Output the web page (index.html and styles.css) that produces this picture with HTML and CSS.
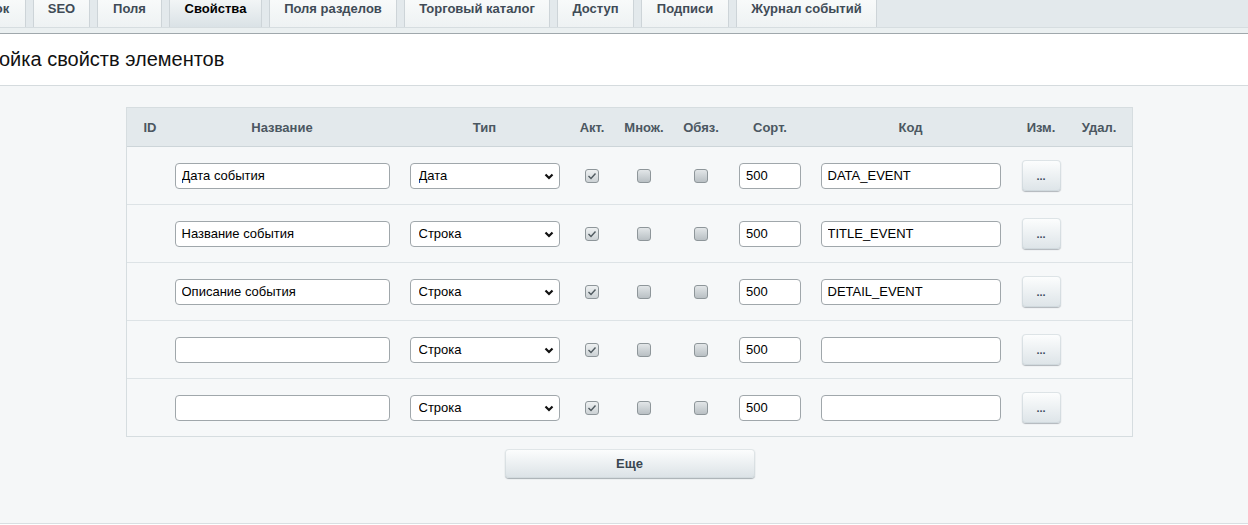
FILE: index.html
```html
<!DOCTYPE html>
<html lang="ru">
<head>
<meta charset="utf-8">
<title>Свойства</title>
<link rel="stylesheet" href="styles.css">
</head>
<body>
<div class="tabbar">
  <div class="tabs">
    <div class="tab t-first">ок</div>
    <div class="tab t-seo">SEO</div>
    <div class="tab t-fields">Поля</div>
    <div class="tab t-props tab-active">Свойства</div>
    <div class="tab t-sect">Поля разделов</div>
    <div class="tab t-cat">Торговый каталог</div>
    <div class="tab t-acc">Доступ</div>
    <div class="tab t-sign">Подписи</div>
    <div class="tab t-log">Журнал событий</div>
  </div>
  <div class="tabstrip"></div>
</div>
<div class="heading">ойка свойств элементов</div>
<div class="main">
  <div class="wrap">
    <div class="grid">
      <div class="row head">
        <div>ID</div><div>Название</div><div>Тип</div><div>Акт.</div><div>Множ.</div><div>Обяз.</div><div>Сорт.</div><div>Код</div><div>Изм.</div><div class="del">Удал.</div>
      </div>
      <div class="row">
        <div></div>
        <input class="inp name" type="text" value="Дата события">
        <div class="sel"><select><option>Дата</option></select><svg class="chev" width="10" height="7" viewBox="0 0 10 7"><polyline points="1.5,1.5 5,5 8.5,1.5" fill="none" stroke="#111" stroke-width="2.2"/></svg></div>
        <span class="cb on"><svg width="12" height="12" viewBox="0 0 12 12"><polyline points="2.5,6 5,8.5 9.5,3.5" fill="none" stroke="#505a60" stroke-width="1.4"/></svg></span>
        <span class="cb"></span>
        <span class="cb"></span>
        <input class="inp sort" type="text" value="500">
        <input class="inp code" type="text" value="DATA_EVENT">
        <button class="edit">...</button>
        <div></div>
      </div>
      <div class="row">
        <div></div>
        <input class="inp name" type="text" value="Название события">
        <div class="sel"><select><option>Строка</option></select><svg class="chev" width="10" height="7" viewBox="0 0 10 7"><polyline points="1.5,1.5 5,5 8.5,1.5" fill="none" stroke="#111" stroke-width="2.2"/></svg></div>
        <span class="cb on"><svg width="12" height="12" viewBox="0 0 12 12"><polyline points="2.5,6 5,8.5 9.5,3.5" fill="none" stroke="#505a60" stroke-width="1.4"/></svg></span>
        <span class="cb"></span>
        <span class="cb"></span>
        <input class="inp sort" type="text" value="500">
        <input class="inp code" type="text" value="TITLE_EVENT">
        <button class="edit">...</button>
        <div></div>
      </div>
      <div class="row">
        <div></div>
        <input class="inp name" type="text" value="Описание события">
        <div class="sel"><select><option>Строка</option></select><svg class="chev" width="10" height="7" viewBox="0 0 10 7"><polyline points="1.5,1.5 5,5 8.5,1.5" fill="none" stroke="#111" stroke-width="2.2"/></svg></div>
        <span class="cb on"><svg width="12" height="12" viewBox="0 0 12 12"><polyline points="2.5,6 5,8.5 9.5,3.5" fill="none" stroke="#505a60" stroke-width="1.4"/></svg></span>
        <span class="cb"></span>
        <span class="cb"></span>
        <input class="inp sort" type="text" value="500">
        <input class="inp code" type="text" value="DETAIL_EVENT">
        <button class="edit">...</button>
        <div></div>
      </div>
      <div class="row">
        <div></div>
        <input class="inp name" type="text" value="">
        <div class="sel"><select><option>Строка</option></select><svg class="chev" width="10" height="7" viewBox="0 0 10 7"><polyline points="1.5,1.5 5,5 8.5,1.5" fill="none" stroke="#111" stroke-width="2.2"/></svg></div>
        <span class="cb on"><svg width="12" height="12" viewBox="0 0 12 12"><polyline points="2.5,6 5,8.5 9.5,3.5" fill="none" stroke="#505a60" stroke-width="1.4"/></svg></span>
        <span class="cb"></span>
        <span class="cb"></span>
        <input class="inp sort" type="text" value="500">
        <input class="inp code" type="text" value="">
        <button class="edit">...</button>
        <div></div>
      </div>
      <div class="row last">
        <div></div>
        <input class="inp name" type="text" value="">
        <div class="sel"><select><option>Строка</option></select><svg class="chev" width="10" height="7" viewBox="0 0 10 7"><polyline points="1.5,1.5 5,5 8.5,1.5" fill="none" stroke="#111" stroke-width="2.2"/></svg></div>
        <span class="cb on"><svg width="12" height="12" viewBox="0 0 12 12"><polyline points="2.5,6 5,8.5 9.5,3.5" fill="none" stroke="#505a60" stroke-width="1.4"/></svg></span>
        <span class="cb"></span>
        <span class="cb"></span>
        <input class="inp sort" type="text" value="500">
        <input class="inp code" type="text" value="">
        <button class="edit">...</button>
        <div></div>
      </div>
    </div>
    <button class="more">Еще</button>
  </div>
</div>
</body>
</html>
```
FILE: styles.css
```css
* { box-sizing: border-box; }
html, body { margin: 0; padding: 0; background: #ffffff; overflow: hidden; }
body { font-family: "Liberation Sans", Arial, sans-serif; font-size: 13px; color: #000; }

.tabbar { background: #e3e9ec; }
.tabs { display: flex; gap: 7px; height: 27px; align-items: stretch; }
.tab {
  flex: 0 0 auto;
  height: 27px;
  padding: 0;
  text-align: center;
  border-left: 1px solid #cdd4d8;
  border-right: 1px solid #cdd4d8;
  background: linear-gradient(#f8fafa, #eef2f3);
  font-weight: bold;
  font-size: 13px;
  line-height: 18px;
  color: #404b56;
  white-space: nowrap;
}
.t-first { width: 48px; margin-left: -22px; }
.t-seo { width: 57px; }
.t-fields { width: 65px; }
.t-props { width: 93px; }
.t-sect { width: 128px; }
.t-cat { width: 146px; }
.t-acc { width: 77px; }
.t-sign { width: 88px; }
.t-log { width: 141px; }
.tab-active { background: linear-gradient(#f2f5f6, #dae2e6); color: #000; }
.tabstrip {
  height: 7px;
  border-top: 1px solid #d6dde0;
  background: #ebf0f1;
  border-bottom: 1px solid #a0a8ac;
}

.heading {
  background: #fff;
  padding: 13px 0 14px;
  margin-left: -1px;
  font-size: 20px;
  line-height: 24px;
  color: #111;
  border-bottom: 1px solid #d5dbde;
}

.main {
  background: #f5f7f8;
  height: 438px;
  padding: 21px 0 0 126px;
  border-bottom: 1px solid #d9dfe2;
}
.wrap { width: 1007px; display: flex; flex-direction: column; align-items: center; }
.grid {
  width: 1007px;
  border: 1px solid #d6dde0;
  background: #f6f8f9;
}
.row {
  display: grid;
  grid-template-columns: 46px 218px 187px 28px 76px 38px 100px 181px 80px 51px;
  height: 58px;
  border-bottom: 1px solid #dde3e6;
  align-items: center;
  justify-items: center;
}
.row.last { height: 57px; border-bottom: none; }
.row.head {
  height: 39px;
  background: #e3e9ec;
  border-bottom: 1px solid #cdd5d9;
  font-weight: bold;
  color: #4b5761;
}
.row.head .del { justify-self: stretch; text-align: center; padding-right: 15px; }

.inp {
  height: 26px;
  border: 1px solid #a0a7ab;
  border-radius: 4px;
  background: #fff;
  padding: 0 6px;
  font-family: "Liberation Sans", Arial, sans-serif;
  font-size: 13px;
  color: #000;
  outline: none;
}
.inp.name { width: 215px; }
.inp.sort { width: 62px; }
.inp.code { width: 180px; }

.sel { position: relative; width: 150px; height: 26px; }
.sel select {
  appearance: none;
  -webkit-appearance: none;
  width: 100%;
  height: 100%;
  border: 1px solid #a0a7ab;
  border-radius: 4px;
  background: #fff;
  padding: 0 24px 0 8px;
  font-family: "Liberation Sans", Arial, sans-serif;
  font-size: 13px;
  color: #000;
  outline: none;
}
.chev { position: absolute; right: 6px; top: 10px; pointer-events: none; }

.cb {
  width: 14px;
  height: 14px;
  border: 1px solid #8e969a;
  border-radius: 3px;
  background: linear-gradient(#e2e6e8, #b9c0c4);
  display: flex;
  align-items: center;
  justify-content: center;
}
.cb.on { background: linear-gradient(#eef1f2, #ccd2d5); }

.edit {
  width: 39px;
  height: 31px;
  border: none;
  border-radius: 4px;
  background: linear-gradient(#fdfefe, #dde4e8);
  box-shadow: 0 1px 1px rgba(90, 100, 110, 0.45), inset 0 0 0 1px rgba(200, 210, 215, 0.6);
  font-family: "Liberation Sans", Arial, sans-serif;
  font-size: 11px;
  font-weight: bold;
  color: #3d4c5e;
  padding: 0;
}

.more {
  margin-top: 12px;
  width: 250px;
  height: 29px;
  border: none;
  border-radius: 4px;
  background: linear-gradient(#fdfefe, #dbe2e6);
  box-shadow: 0 1px 1px rgba(90, 100, 110, 0.5), inset 0 0 0 1px rgba(205, 213, 217, 0.6);
  font-family: "Liberation Sans", Arial, sans-serif;
  font-size: 13px;
  font-weight: bold;
  color: #3a4650;
  padding: 0;
}
```
